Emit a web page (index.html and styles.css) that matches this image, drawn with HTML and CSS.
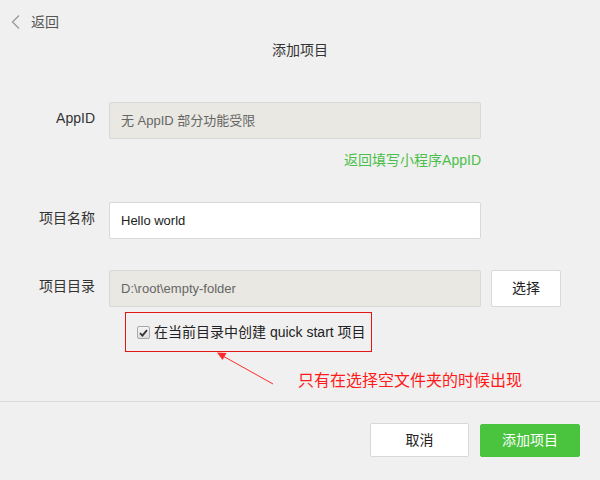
FILE: index.html
```html
<!DOCTYPE html>
<html lang="zh-CN">
<head>
<meta charset="utf-8">
<title>添加项目</title>
<link rel="stylesheet" href="styles.css">
</head>
<body>
<div class="page">
  <div class="topbar">
    <span class="back">
      <svg class="chev" width="9" height="14" viewBox="0 0 9 14"><path d="M8 0.5 L1.5 7 L8 13.5" fill="none" stroke="#9a9a9a" stroke-width="1.3"/></svg>
      <span class="back-text">返回</span>
    </span>
  </div>
  <div class="title">添加项目</div>

  <div class="form">
    <div class="row row-appid">
      <div class="label">AppID</div>
      <div class="input disabled">无 AppID 部分功能受限</div>
    </div>
    <div class="linkrow"><span class="link">返回填写小程序AppID</span></div>

    <div class="row row-name">
      <div class="label">项目名称</div>
      <div class="input">Hello world</div>
    </div>

    <div class="row row-dir">
      <div class="label">项目目录</div>
      <div class="input disabled">D:\root\empty-folder</div>
      <div class="btn btn-choose">选择</div>
    </div>

    <div class="quick">
      <span class="check">
        <svg width="9" height="8" viewBox="0 0 9 8"><path d="M1 4.2 L3.4 6.6 L8 1.2" fill="none" stroke="#333" stroke-width="1.8"/></svg>
      </span>
      <span class="quick-text">在当前目录中创建 quick start 项目</span>
    </div>

    <div class="note">只有在选择空文件夹的时候出现</div>
  </div>

  <div class="sep"></div>

  <div class="footer">
    <div class="btn btn-cancel">取消</div>
    <div class="btn btn-add">添加项目</div>
  </div>

  <svg class="arrow" width="600" height="480" viewBox="0 0 600 480">
    <line x1="273" y1="384" x2="222" y2="355.5" stroke="#ff2a2a" stroke-width="1"/>
    <polygon points="217,352.5 226.5,353 222.5,360" fill="#ff2a2a"/>
  </svg>
</div>
</body>
</html>
```
FILE: styles.css
```css
* { box-sizing: border-box; }
html, body {
  margin: 0;
  padding: 0;
  background: #f0f0f0;
}
body {
  font-family: "Liberation Sans", "Noto Sans CJK SC", sans-serif;
  font-size: 14px;
  color: #333;
}
.page {
  position: relative;
  width: 600px;
  height: 480px;
  overflow: hidden;
}
.topbar {
  height: 40px;
  padding: 12px 0 0 11px;
}
.back {
  display: flex;
  align-items: center;
  height: 20px;
  line-height: 20px;
  color: #555;
}
.chev { display: block; margin-right: 11px; }
.back-text { font-size: 14px; }
.title {
  height: 20px;
  line-height: 20px;
  text-align: center;
  color: #333;
}
.form { margin-top: 42px; }
.row {
  display: grid;
  grid-template-columns: 95px 372px 70px;
  column-gap: 14px;
  align-items: start;
}
.row-dir { grid-template-columns: 95px 372px 70px; column-gap: 14px 10px; }
.row-dir .btn-choose { width: 70px; margin-left: -4px; }
.label {
  text-align: right;
  line-height: 20px;
  padding-top: 6px;
  color: #333;
  white-space: nowrap;
}
.input {
  height: 37px;
  border: 1px solid #d9d9d9;
  border-radius: 2px;
  background: #fff;
  padding: 0 11px;
  line-height: 35px;
  font-size: 13px;
  color: #222;
}
.input.disabled {
  background: #e9e8e2;
  color: #666;
}
.linkrow {
  width: 481px;
  margin-top: 11px;
  text-align: right;
  line-height: 20px;
  height: 20px;
}
.link { color: #4cbf4a; }
.row-name { margin-top: 32px; }
.row-dir { margin-top: 31px; }
.btn {
  height: 37px;
  line-height: 35px;
  text-align: center;
  border: 1px solid #d9d9d9;
  border-radius: 2px;
  background: #fff;
  color: #222;
}
.quick {
  margin: 5px 0 0 125px;
  width: 247px;
  height: 40px;
  border: 1px solid #e41616;
  display: flex;
  align-items: center;
  padding-left: 11px;
}
.check {
  width: 13px;
  height: 13px;
  border: 1px solid #a8a8a8;
  border-radius: 2px;
  background: linear-gradient(#f4f4f4, #dedede);
  display: flex;
  align-items: center;
  justify-content: center;
  margin-right: 4px;
  margin-top: 1px;
}
.check svg { display: block; }
.quick-text { line-height: 20px; color: #222; }
.note {
  margin: 19px 0 0 298px;
  line-height: 20px;
  height: 20px;
  font-size: 16px;
  color: #ff1a1a;
}
.sep {
  margin-top: 10px;
  height: 1px;
  background: #dadada;
}
.footer {
  display: flex;
  justify-content: flex-end;
  gap: 11px;
  padding: 21px 20px 0 0;
}
.btn-cancel {
  width: 99px;
  height: 34px;
  line-height: 32px;
}
.btn-add {
  width: 100px;
  height: 33px;
  line-height: 31px;
  margin-top: 1px;
  background: #4ac33e;
  border-color: #4ac33e;
  color: #fff;
}
.arrow {
  position: absolute;
  left: 0;
  top: 0;
  pointer-events: none;
}
```
